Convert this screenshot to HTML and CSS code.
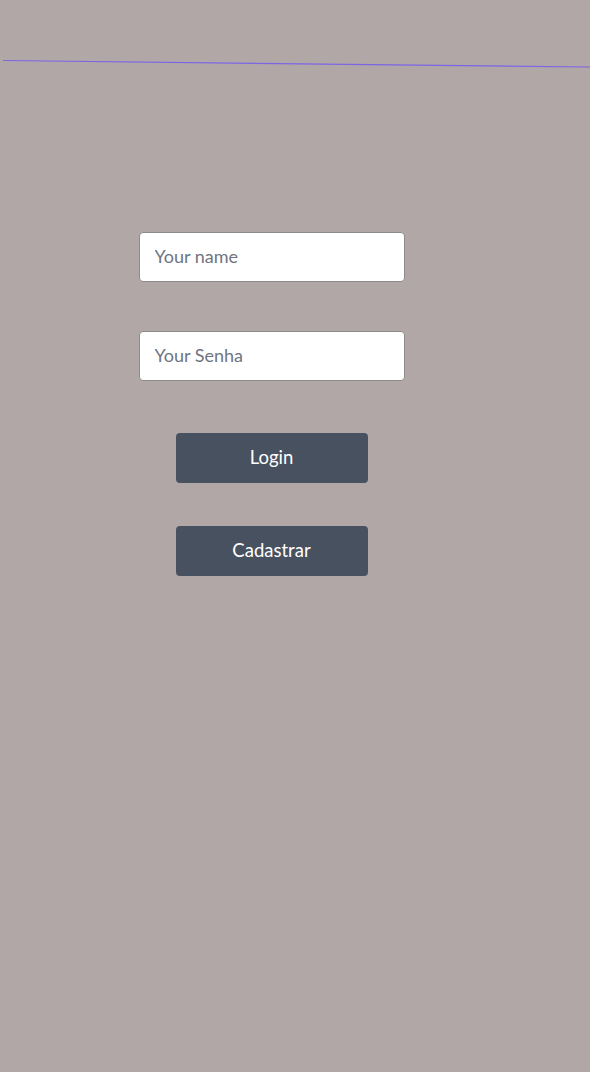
FILE: index.html
```html
<!DOCTYPE html>
<html>
<head>
<meta charset="utf-8">
<link rel="stylesheet" href="styles.css">
</head>
<body>
<svg class="rule" width="590" height="80" viewBox="0 0 590 80"><line x1="3" y1="60.5" x2="590" y2="67" stroke="#7b65e6" stroke-width="1.2"/></svg>
<main class="form">
  <input class="field" type="text" placeholder="Your name">
  <input class="field field-second" type="password" placeholder="Your Senha">
  <button class="btn btn-login">Login</button>
  <button class="btn btn-signup">Cadastrar</button>
</main>
</body>
</html>
```
FILE: styles.css
```css
html, body {
  margin: 0;
  padding: 0;
  background: #b2a7a7;
  font-family: Lato, "Open Sans", sans-serif;
  height: 100%;
}
.rule {
  display: block;
}
.form {
  width: 543px;
  padding-top: 152px;
  display: flex;
  flex-direction: column;
  align-items: center;
}
.field {
  box-sizing: border-box;
  width: 266px;
  height: 50px;
  border: 1px solid #8d8a8c;
  border-radius: 4px;
  background: #fff;
  padding: 0 15px 2px;
  font-family: inherit;
  font-size: 18px;
  color: #333;
  outline: none;
}
.field::placeholder {
  color: #6f7481;
}
.field-second {
  margin-top: 49px;
}
.btn {
  box-sizing: border-box;
  width: 192px;
  height: 50px;
  border: none;
  border-radius: 4px;
  background: #485160;
  color: #fff;
  font-family: inherit;
  font-size: 18.5px;
  padding: 0 0 2px;
  cursor: pointer;
}
.btn-login {
  margin-top: 52px;
}
.btn-signup {
  margin-top: 43px;
}
```
